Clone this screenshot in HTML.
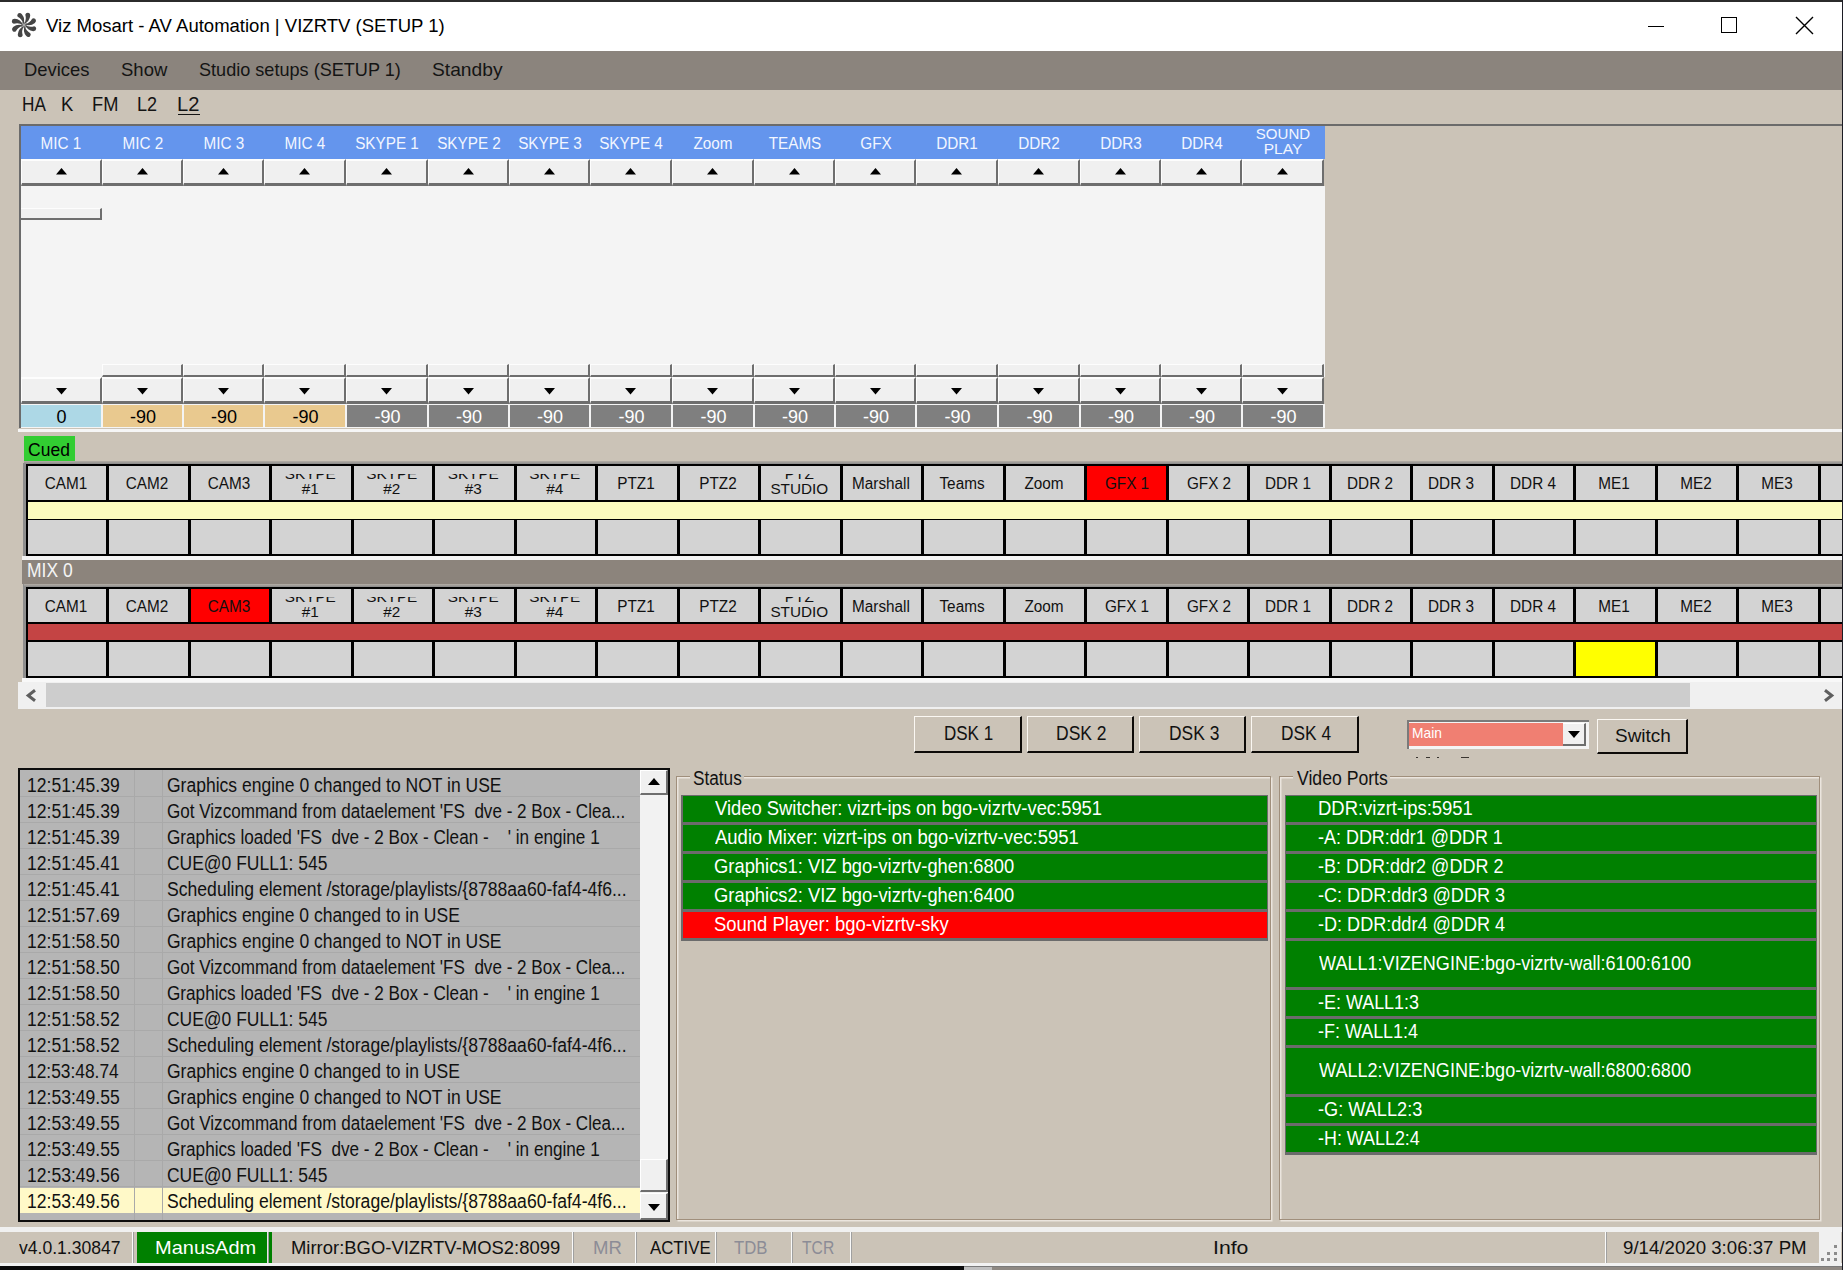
<!DOCTYPE html><html><head><meta charset="utf-8"><style>
html,body{margin:0;padding:0;width:1843px;height:1270px;overflow:hidden;background:#cbc3b7;font-family:"Liberation Sans", sans-serif;}
div,span,svg{position:absolute;box-sizing:border-box;}
.t{white-space:pre;line-height:1;}
</style></head><body>
<div style="left:0px;top:0px;width:1843px;height:2px;background:#2b2b2b;"></div>
<div style="left:0px;top:2px;width:1843px;height:49px;background:#ffffff;"></div>
<svg style="left:11.3px;top:12px" width="26" height="26" viewBox="0 0 26 26" overflow="visible"><circle cx="13" cy="13" r="3.2" fill="#a8a8a8"/><path transform="rotate(14 13 13)" d="M12.8 12 Q 17.6 8.4 16.8 2.6 Q 16.2 -0.2 13.8 0.2 Q 11.6 0.8 11.8 2.8 Q 14.4 7 12.8 12 Z" fill="#454545"/><path transform="rotate(59 13 13)" d="M12.8 12 Q 17.6 8.4 16.8 2.6 Q 16.2 -0.2 13.8 0.2 Q 11.6 0.8 11.8 2.8 Q 14.4 7 12.8 12 Z" fill="#454545"/><path transform="rotate(104 13 13)" d="M12.8 12 Q 17.6 8.4 16.8 2.6 Q 16.2 -0.2 13.8 0.2 Q 11.6 0.8 11.8 2.8 Q 14.4 7 12.8 12 Z" fill="#454545"/><path transform="rotate(149 13 13)" d="M12.8 12 Q 17.6 8.4 16.8 2.6 Q 16.2 -0.2 13.8 0.2 Q 11.6 0.8 11.8 2.8 Q 14.4 7 12.8 12 Z" fill="#454545"/><path transform="rotate(194 13 13)" d="M12.8 12 Q 17.6 8.4 16.8 2.6 Q 16.2 -0.2 13.8 0.2 Q 11.6 0.8 11.8 2.8 Q 14.4 7 12.8 12 Z" fill="#454545"/><path transform="rotate(239 13 13)" d="M12.8 12 Q 17.6 8.4 16.8 2.6 Q 16.2 -0.2 13.8 0.2 Q 11.6 0.8 11.8 2.8 Q 14.4 7 12.8 12 Z" fill="#454545"/><path transform="rotate(284 13 13)" d="M12.8 12 Q 17.6 8.4 16.8 2.6 Q 16.2 -0.2 13.8 0.2 Q 11.6 0.8 11.8 2.8 Q 14.4 7 12.8 12 Z" fill="#454545"/><path transform="rotate(329 13 13)" d="M12.8 12 Q 17.6 8.4 16.8 2.6 Q 16.2 -0.2 13.8 0.2 Q 11.6 0.8 11.8 2.8 Q 14.4 7 12.8 12 Z" fill="#454545"/></svg>
<span class="t" style="left:46.10px;top:17.07px;font-size:18.46px;color:#000;transform:scaleX(1.0045);transform-origin:0 0;">Viz Mosart - AV Automation | VIZRTV (SETUP 1)</span>
<div style="left:1648px;top:25.5px;width:16px;height:1.5px;background:#000;"></div>
<div style="left:1721px;top:17px;width:16px;height:16px;border:1.5px solid #000"></div>
<svg style="left:1795px;top:16px" width="19" height="19" viewBox="0 0 19 19"><path d="M1 1L18 18M18 1L1 18" stroke="#000" stroke-width="1.4"/></svg>
<div style="left:0px;top:51px;width:1843px;height:39px;background:#8b847d;"></div>
<span class="t" style="left:24.23px;top:60.18px;font-size:19.04px;color:#141414;transform:scaleX(0.9682);transform-origin:0 0;">Devices</span>
<span class="t" style="left:120.83px;top:60.18px;font-size:19.04px;color:#141414;transform:scaleX(0.9723);transform-origin:0 0;">Show</span>
<span class="t" style="left:198.75px;top:60.18px;font-size:19.04px;color:#141414;transform:scaleX(0.9505);transform-origin:0 0;">Studio setups (SETUP 1)</span>
<span class="t" style="left:431.79px;top:60.18px;font-size:19.04px;color:#141414;transform:scaleX(1.0103);transform-origin:0 0;">Standby</span>
<span class="t" style="left:22.24px;top:93.92px;font-size:20.06px;color:#141414;transform:scaleX(0.8577);transform-origin:0 0;">HA</span>
<span class="t" style="left:60.98px;top:93.92px;font-size:20.06px;color:#141414;transform:scaleX(0.9167);transform-origin:0 0;">K</span>
<span class="t" style="left:91.99px;top:93.92px;font-size:20.06px;color:#141414;transform:scaleX(0.9115);transform-origin:0 0;">FM</span>
<span class="t" style="left:137.20px;top:93.92px;font-size:20.06px;color:#141414;transform:scaleX(0.9000);transform-origin:0 0;">L2</span>
<span class="t" style="left:177.30px;top:93.92px;font-size:20.06px;color:#141414;transform:scaleX(1.0050);transform-origin:0 0;">L2</span>
<div style="left:177.5px;top:113.5px;width:22px;height:1.5px;background:#141414;"></div>
<div style="left:19px;top:124px;width:1824px;height:2px;background:#6b6b6b;"></div>
<div style="left:19px;top:125px;width:2px;height:303px;background:#6b6b6b;"></div>
<div style="left:21px;top:126px;width:1304px;height:33px;background:#6495ed;"></div>
<div style="left:21px;top:186px;width:1304px;height:191px;background:#f4f4f4;"></div>
<div style="left:21px;top:404px;width:1304px;height:24px;background:#f4f4f4;"></div>
<span class="t" style="left:-238.7px;width:600px;text-align:center;top:135.86px;font-size:16px;color:#f2f6ff;transform:scaleX(0.955);">MIC 1</span>
<div style="left:21px;top:159px;width:81px;height:27px;background:#f0f0f0;border-top:2px solid #fdfdfd;border-left:1px solid #fdfdfd;border-bottom:3px solid #6e6e6e;border-right:2px solid #6e6e6e"></div>
<svg style="left:55.5px;top:168.3px" width="11" height="6.5" viewBox="0 0 11 6.5"><path d="M5.5 0L11 6.5H0Z" fill="#000"/></svg>
<div style="left:21px;top:377px;width:81px;height:27px;background:#f0f0f0;border-top:2px solid #fdfdfd;border-left:1px solid #fdfdfd;border-bottom:3px solid #6e6e6e;border-right:2px solid #6e6e6e"></div>
<svg style="left:55.5px;top:388.2px" width="11" height="6.5" viewBox="0 0 11 6.5"><path d="M0 0H11L5.5 6.5Z" fill="#000"/></svg>
<div style="left:21px;top:208px;width:81px;height:12px;background:#f0f0f0;border-top:1px solid #fdfdfd;border-bottom:2px solid #6e6e6e;border-right:2px solid #6e6e6e"></div>
<div style="left:21px;top:405px;width:80px;height:22px;background:#add8e6;"></div>
<span class="t" style="left:-238.5px;width:600px;text-align:center;top:408.06px;font-size:18px;color:#000;">0</span>
<span class="t" style="left:-157.2px;width:600px;text-align:center;top:135.86px;font-size:16px;color:#f2f6ff;transform:scaleX(0.955);">MIC 2</span>
<div style="left:102px;top:159px;width:81px;height:27px;background:#f0f0f0;border-top:2px solid #fdfdfd;border-left:1px solid #fdfdfd;border-bottom:3px solid #6e6e6e;border-right:2px solid #6e6e6e"></div>
<svg style="left:136.5px;top:168.3px" width="11" height="6.5" viewBox="0 0 11 6.5"><path d="M5.5 0L11 6.5H0Z" fill="#000"/></svg>
<div style="left:102px;top:377px;width:81px;height:27px;background:#f0f0f0;border-top:2px solid #fdfdfd;border-left:1px solid #fdfdfd;border-bottom:3px solid #6e6e6e;border-right:2px solid #6e6e6e"></div>
<svg style="left:136.5px;top:388.2px" width="11" height="6.5" viewBox="0 0 11 6.5"><path d="M0 0H11L5.5 6.5Z" fill="#000"/></svg>
<div style="left:102px;top:364px;width:81px;height:13px;background:#f0f0f0;border-top:1px solid #fdfdfd;border-left:1px solid #fdfdfd;border-bottom:2px solid #6e6e6e;border-right:2px solid #6e6e6e"></div>
<div style="left:103px;top:405px;width:79px;height:22px;background:#e9c98f;"></div>
<span class="t" style="left:-157.0px;width:600px;text-align:center;top:408.06px;font-size:18px;color:#000;">-90</span>
<span class="t" style="left:-76.19999999999999px;width:600px;text-align:center;top:135.86px;font-size:16px;color:#f2f6ff;transform:scaleX(0.955);">MIC 3</span>
<div style="left:183px;top:159px;width:81px;height:27px;background:#f0f0f0;border-top:2px solid #fdfdfd;border-left:1px solid #fdfdfd;border-bottom:3px solid #6e6e6e;border-right:2px solid #6e6e6e"></div>
<svg style="left:217.5px;top:168.3px" width="11" height="6.5" viewBox="0 0 11 6.5"><path d="M5.5 0L11 6.5H0Z" fill="#000"/></svg>
<div style="left:183px;top:377px;width:81px;height:27px;background:#f0f0f0;border-top:2px solid #fdfdfd;border-left:1px solid #fdfdfd;border-bottom:3px solid #6e6e6e;border-right:2px solid #6e6e6e"></div>
<svg style="left:217.5px;top:388.2px" width="11" height="6.5" viewBox="0 0 11 6.5"><path d="M0 0H11L5.5 6.5Z" fill="#000"/></svg>
<div style="left:183px;top:364px;width:81px;height:13px;background:#f0f0f0;border-top:1px solid #fdfdfd;border-left:1px solid #fdfdfd;border-bottom:2px solid #6e6e6e;border-right:2px solid #6e6e6e"></div>
<div style="left:184px;top:405px;width:79px;height:22px;background:#e9c98f;"></div>
<span class="t" style="left:-76.0px;width:600px;text-align:center;top:408.06px;font-size:18px;color:#000;">-90</span>
<span class="t" style="left:5.300000000000011px;width:600px;text-align:center;top:135.86px;font-size:16px;color:#f2f6ff;transform:scaleX(0.955);">MIC 4</span>
<div style="left:264px;top:159px;width:82px;height:27px;background:#f0f0f0;border-top:2px solid #fdfdfd;border-left:1px solid #fdfdfd;border-bottom:3px solid #6e6e6e;border-right:2px solid #6e6e6e"></div>
<svg style="left:299.0px;top:168.3px" width="11" height="6.5" viewBox="0 0 11 6.5"><path d="M5.5 0L11 6.5H0Z" fill="#000"/></svg>
<div style="left:264px;top:377px;width:82px;height:27px;background:#f0f0f0;border-top:2px solid #fdfdfd;border-left:1px solid #fdfdfd;border-bottom:3px solid #6e6e6e;border-right:2px solid #6e6e6e"></div>
<svg style="left:299.0px;top:388.2px" width="11" height="6.5" viewBox="0 0 11 6.5"><path d="M0 0H11L5.5 6.5Z" fill="#000"/></svg>
<div style="left:264px;top:364px;width:82px;height:13px;background:#f0f0f0;border-top:1px solid #fdfdfd;border-left:1px solid #fdfdfd;border-bottom:2px solid #6e6e6e;border-right:2px solid #6e6e6e"></div>
<div style="left:265px;top:405px;width:80px;height:22px;background:#e9c98f;"></div>
<span class="t" style="left:5.5px;width:600px;text-align:center;top:408.06px;font-size:18px;color:#000;">-90</span>
<span class="t" style="left:87.30000000000001px;width:600px;text-align:center;top:135.86px;font-size:16px;color:#f2f6ff;transform:scaleX(0.955);">SKYPE 1</span>
<div style="left:346px;top:159px;width:82px;height:27px;background:#f0f0f0;border-top:2px solid #fdfdfd;border-left:1px solid #fdfdfd;border-bottom:3px solid #6e6e6e;border-right:2px solid #6e6e6e"></div>
<svg style="left:381.0px;top:168.3px" width="11" height="6.5" viewBox="0 0 11 6.5"><path d="M5.5 0L11 6.5H0Z" fill="#000"/></svg>
<div style="left:346px;top:377px;width:82px;height:27px;background:#f0f0f0;border-top:2px solid #fdfdfd;border-left:1px solid #fdfdfd;border-bottom:3px solid #6e6e6e;border-right:2px solid #6e6e6e"></div>
<svg style="left:381.0px;top:388.2px" width="11" height="6.5" viewBox="0 0 11 6.5"><path d="M0 0H11L5.5 6.5Z" fill="#000"/></svg>
<div style="left:346px;top:364px;width:82px;height:13px;background:#f0f0f0;border-top:1px solid #fdfdfd;border-left:1px solid #fdfdfd;border-bottom:2px solid #6e6e6e;border-right:2px solid #6e6e6e"></div>
<div style="left:347px;top:405px;width:80px;height:22px;background:#7f7f7f;"></div>
<span class="t" style="left:87.5px;width:600px;text-align:center;top:408.06px;font-size:18px;color:#fff;">-90</span>
<span class="t" style="left:168.8px;width:600px;text-align:center;top:135.86px;font-size:16px;color:#f2f6ff;transform:scaleX(0.955);">SKYPE 2</span>
<div style="left:428px;top:159px;width:81px;height:27px;background:#f0f0f0;border-top:2px solid #fdfdfd;border-left:1px solid #fdfdfd;border-bottom:3px solid #6e6e6e;border-right:2px solid #6e6e6e"></div>
<svg style="left:462.5px;top:168.3px" width="11" height="6.5" viewBox="0 0 11 6.5"><path d="M5.5 0L11 6.5H0Z" fill="#000"/></svg>
<div style="left:428px;top:377px;width:81px;height:27px;background:#f0f0f0;border-top:2px solid #fdfdfd;border-left:1px solid #fdfdfd;border-bottom:3px solid #6e6e6e;border-right:2px solid #6e6e6e"></div>
<svg style="left:462.5px;top:388.2px" width="11" height="6.5" viewBox="0 0 11 6.5"><path d="M0 0H11L5.5 6.5Z" fill="#000"/></svg>
<div style="left:428px;top:364px;width:81px;height:13px;background:#f0f0f0;border-top:1px solid #fdfdfd;border-left:1px solid #fdfdfd;border-bottom:2px solid #6e6e6e;border-right:2px solid #6e6e6e"></div>
<div style="left:429px;top:405px;width:79px;height:22px;background:#7f7f7f;"></div>
<span class="t" style="left:169.0px;width:600px;text-align:center;top:408.06px;font-size:18px;color:#fff;">-90</span>
<span class="t" style="left:249.79999999999995px;width:600px;text-align:center;top:135.86px;font-size:16px;color:#f2f6ff;transform:scaleX(0.955);">SKYPE 3</span>
<div style="left:509px;top:159px;width:81px;height:27px;background:#f0f0f0;border-top:2px solid #fdfdfd;border-left:1px solid #fdfdfd;border-bottom:3px solid #6e6e6e;border-right:2px solid #6e6e6e"></div>
<svg style="left:543.5px;top:168.3px" width="11" height="6.5" viewBox="0 0 11 6.5"><path d="M5.5 0L11 6.5H0Z" fill="#000"/></svg>
<div style="left:509px;top:377px;width:81px;height:27px;background:#f0f0f0;border-top:2px solid #fdfdfd;border-left:1px solid #fdfdfd;border-bottom:3px solid #6e6e6e;border-right:2px solid #6e6e6e"></div>
<svg style="left:543.5px;top:388.2px" width="11" height="6.5" viewBox="0 0 11 6.5"><path d="M0 0H11L5.5 6.5Z" fill="#000"/></svg>
<div style="left:509px;top:364px;width:81px;height:13px;background:#f0f0f0;border-top:1px solid #fdfdfd;border-left:1px solid #fdfdfd;border-bottom:2px solid #6e6e6e;border-right:2px solid #6e6e6e"></div>
<div style="left:510px;top:405px;width:79px;height:22px;background:#7f7f7f;"></div>
<span class="t" style="left:250.0px;width:600px;text-align:center;top:408.06px;font-size:18px;color:#fff;">-90</span>
<span class="t" style="left:331.29999999999995px;width:600px;text-align:center;top:135.86px;font-size:16px;color:#f2f6ff;transform:scaleX(0.955);">SKYPE 4</span>
<div style="left:590px;top:159px;width:82px;height:27px;background:#f0f0f0;border-top:2px solid #fdfdfd;border-left:1px solid #fdfdfd;border-bottom:3px solid #6e6e6e;border-right:2px solid #6e6e6e"></div>
<svg style="left:625.0px;top:168.3px" width="11" height="6.5" viewBox="0 0 11 6.5"><path d="M5.5 0L11 6.5H0Z" fill="#000"/></svg>
<div style="left:590px;top:377px;width:82px;height:27px;background:#f0f0f0;border-top:2px solid #fdfdfd;border-left:1px solid #fdfdfd;border-bottom:3px solid #6e6e6e;border-right:2px solid #6e6e6e"></div>
<svg style="left:625.0px;top:388.2px" width="11" height="6.5" viewBox="0 0 11 6.5"><path d="M0 0H11L5.5 6.5Z" fill="#000"/></svg>
<div style="left:590px;top:364px;width:82px;height:13px;background:#f0f0f0;border-top:1px solid #fdfdfd;border-left:1px solid #fdfdfd;border-bottom:2px solid #6e6e6e;border-right:2px solid #6e6e6e"></div>
<div style="left:591px;top:405px;width:80px;height:22px;background:#7f7f7f;"></div>
<span class="t" style="left:331.5px;width:600px;text-align:center;top:408.06px;font-size:18px;color:#fff;">-90</span>
<span class="t" style="left:413.29999999999995px;width:600px;text-align:center;top:135.86px;font-size:16px;color:#f2f6ff;transform:scaleX(0.955);">Zoom</span>
<div style="left:672px;top:159px;width:82px;height:27px;background:#f0f0f0;border-top:2px solid #fdfdfd;border-left:1px solid #fdfdfd;border-bottom:3px solid #6e6e6e;border-right:2px solid #6e6e6e"></div>
<svg style="left:707.0px;top:168.3px" width="11" height="6.5" viewBox="0 0 11 6.5"><path d="M5.5 0L11 6.5H0Z" fill="#000"/></svg>
<div style="left:672px;top:377px;width:82px;height:27px;background:#f0f0f0;border-top:2px solid #fdfdfd;border-left:1px solid #fdfdfd;border-bottom:3px solid #6e6e6e;border-right:2px solid #6e6e6e"></div>
<svg style="left:707.0px;top:388.2px" width="11" height="6.5" viewBox="0 0 11 6.5"><path d="M0 0H11L5.5 6.5Z" fill="#000"/></svg>
<div style="left:672px;top:364px;width:82px;height:13px;background:#f0f0f0;border-top:1px solid #fdfdfd;border-left:1px solid #fdfdfd;border-bottom:2px solid #6e6e6e;border-right:2px solid #6e6e6e"></div>
<div style="left:673px;top:405px;width:80px;height:22px;background:#7f7f7f;"></div>
<span class="t" style="left:413.5px;width:600px;text-align:center;top:408.06px;font-size:18px;color:#fff;">-90</span>
<span class="t" style="left:494.79999999999995px;width:600px;text-align:center;top:135.86px;font-size:16px;color:#f2f6ff;transform:scaleX(0.955);">TEAMS</span>
<div style="left:754px;top:159px;width:81px;height:27px;background:#f0f0f0;border-top:2px solid #fdfdfd;border-left:1px solid #fdfdfd;border-bottom:3px solid #6e6e6e;border-right:2px solid #6e6e6e"></div>
<svg style="left:788.5px;top:168.3px" width="11" height="6.5" viewBox="0 0 11 6.5"><path d="M5.5 0L11 6.5H0Z" fill="#000"/></svg>
<div style="left:754px;top:377px;width:81px;height:27px;background:#f0f0f0;border-top:2px solid #fdfdfd;border-left:1px solid #fdfdfd;border-bottom:3px solid #6e6e6e;border-right:2px solid #6e6e6e"></div>
<svg style="left:788.5px;top:388.2px" width="11" height="6.5" viewBox="0 0 11 6.5"><path d="M0 0H11L5.5 6.5Z" fill="#000"/></svg>
<div style="left:754px;top:364px;width:81px;height:13px;background:#f0f0f0;border-top:1px solid #fdfdfd;border-left:1px solid #fdfdfd;border-bottom:2px solid #6e6e6e;border-right:2px solid #6e6e6e"></div>
<div style="left:755px;top:405px;width:79px;height:22px;background:#7f7f7f;"></div>
<span class="t" style="left:495.0px;width:600px;text-align:center;top:408.06px;font-size:18px;color:#fff;">-90</span>
<span class="t" style="left:575.8px;width:600px;text-align:center;top:135.86px;font-size:16px;color:#f2f6ff;transform:scaleX(0.955);">GFX</span>
<div style="left:835px;top:159px;width:81px;height:27px;background:#f0f0f0;border-top:2px solid #fdfdfd;border-left:1px solid #fdfdfd;border-bottom:3px solid #6e6e6e;border-right:2px solid #6e6e6e"></div>
<svg style="left:869.5px;top:168.3px" width="11" height="6.5" viewBox="0 0 11 6.5"><path d="M5.5 0L11 6.5H0Z" fill="#000"/></svg>
<div style="left:835px;top:377px;width:81px;height:27px;background:#f0f0f0;border-top:2px solid #fdfdfd;border-left:1px solid #fdfdfd;border-bottom:3px solid #6e6e6e;border-right:2px solid #6e6e6e"></div>
<svg style="left:869.5px;top:388.2px" width="11" height="6.5" viewBox="0 0 11 6.5"><path d="M0 0H11L5.5 6.5Z" fill="#000"/></svg>
<div style="left:835px;top:364px;width:81px;height:13px;background:#f0f0f0;border-top:1px solid #fdfdfd;border-left:1px solid #fdfdfd;border-bottom:2px solid #6e6e6e;border-right:2px solid #6e6e6e"></div>
<div style="left:836px;top:405px;width:79px;height:22px;background:#7f7f7f;"></div>
<span class="t" style="left:576.0px;width:600px;text-align:center;top:408.06px;font-size:18px;color:#fff;">-90</span>
<span class="t" style="left:657.3px;width:600px;text-align:center;top:135.86px;font-size:16px;color:#f2f6ff;transform:scaleX(0.955);">DDR1</span>
<div style="left:916px;top:159px;width:82px;height:27px;background:#f0f0f0;border-top:2px solid #fdfdfd;border-left:1px solid #fdfdfd;border-bottom:3px solid #6e6e6e;border-right:2px solid #6e6e6e"></div>
<svg style="left:951.0px;top:168.3px" width="11" height="6.5" viewBox="0 0 11 6.5"><path d="M5.5 0L11 6.5H0Z" fill="#000"/></svg>
<div style="left:916px;top:377px;width:82px;height:27px;background:#f0f0f0;border-top:2px solid #fdfdfd;border-left:1px solid #fdfdfd;border-bottom:3px solid #6e6e6e;border-right:2px solid #6e6e6e"></div>
<svg style="left:951.0px;top:388.2px" width="11" height="6.5" viewBox="0 0 11 6.5"><path d="M0 0H11L5.5 6.5Z" fill="#000"/></svg>
<div style="left:916px;top:364px;width:82px;height:13px;background:#f0f0f0;border-top:1px solid #fdfdfd;border-left:1px solid #fdfdfd;border-bottom:2px solid #6e6e6e;border-right:2px solid #6e6e6e"></div>
<div style="left:917px;top:405px;width:80px;height:22px;background:#7f7f7f;"></div>
<span class="t" style="left:657.5px;width:600px;text-align:center;top:408.06px;font-size:18px;color:#fff;">-90</span>
<span class="t" style="left:739.3px;width:600px;text-align:center;top:135.86px;font-size:16px;color:#f2f6ff;transform:scaleX(0.955);">DDR2</span>
<div style="left:998px;top:159px;width:82px;height:27px;background:#f0f0f0;border-top:2px solid #fdfdfd;border-left:1px solid #fdfdfd;border-bottom:3px solid #6e6e6e;border-right:2px solid #6e6e6e"></div>
<svg style="left:1033.0px;top:168.3px" width="11" height="6.5" viewBox="0 0 11 6.5"><path d="M5.5 0L11 6.5H0Z" fill="#000"/></svg>
<div style="left:998px;top:377px;width:82px;height:27px;background:#f0f0f0;border-top:2px solid #fdfdfd;border-left:1px solid #fdfdfd;border-bottom:3px solid #6e6e6e;border-right:2px solid #6e6e6e"></div>
<svg style="left:1033.0px;top:388.2px" width="11" height="6.5" viewBox="0 0 11 6.5"><path d="M0 0H11L5.5 6.5Z" fill="#000"/></svg>
<div style="left:998px;top:364px;width:82px;height:13px;background:#f0f0f0;border-top:1px solid #fdfdfd;border-left:1px solid #fdfdfd;border-bottom:2px solid #6e6e6e;border-right:2px solid #6e6e6e"></div>
<div style="left:999px;top:405px;width:80px;height:22px;background:#7f7f7f;"></div>
<span class="t" style="left:739.5px;width:600px;text-align:center;top:408.06px;font-size:18px;color:#fff;">-90</span>
<span class="t" style="left:820.8px;width:600px;text-align:center;top:135.86px;font-size:16px;color:#f2f6ff;transform:scaleX(0.955);">DDR3</span>
<div style="left:1080px;top:159px;width:81px;height:27px;background:#f0f0f0;border-top:2px solid #fdfdfd;border-left:1px solid #fdfdfd;border-bottom:3px solid #6e6e6e;border-right:2px solid #6e6e6e"></div>
<svg style="left:1114.5px;top:168.3px" width="11" height="6.5" viewBox="0 0 11 6.5"><path d="M5.5 0L11 6.5H0Z" fill="#000"/></svg>
<div style="left:1080px;top:377px;width:81px;height:27px;background:#f0f0f0;border-top:2px solid #fdfdfd;border-left:1px solid #fdfdfd;border-bottom:3px solid #6e6e6e;border-right:2px solid #6e6e6e"></div>
<svg style="left:1114.5px;top:388.2px" width="11" height="6.5" viewBox="0 0 11 6.5"><path d="M0 0H11L5.5 6.5Z" fill="#000"/></svg>
<div style="left:1080px;top:364px;width:81px;height:13px;background:#f0f0f0;border-top:1px solid #fdfdfd;border-left:1px solid #fdfdfd;border-bottom:2px solid #6e6e6e;border-right:2px solid #6e6e6e"></div>
<div style="left:1081px;top:405px;width:79px;height:22px;background:#7f7f7f;"></div>
<span class="t" style="left:821.0px;width:600px;text-align:center;top:408.06px;font-size:18px;color:#fff;">-90</span>
<span class="t" style="left:901.8px;width:600px;text-align:center;top:135.86px;font-size:16px;color:#f2f6ff;transform:scaleX(0.955);">DDR4</span>
<div style="left:1161px;top:159px;width:81px;height:27px;background:#f0f0f0;border-top:2px solid #fdfdfd;border-left:1px solid #fdfdfd;border-bottom:3px solid #6e6e6e;border-right:2px solid #6e6e6e"></div>
<svg style="left:1195.5px;top:168.3px" width="11" height="6.5" viewBox="0 0 11 6.5"><path d="M5.5 0L11 6.5H0Z" fill="#000"/></svg>
<div style="left:1161px;top:377px;width:81px;height:27px;background:#f0f0f0;border-top:2px solid #fdfdfd;border-left:1px solid #fdfdfd;border-bottom:3px solid #6e6e6e;border-right:2px solid #6e6e6e"></div>
<svg style="left:1195.5px;top:388.2px" width="11" height="6.5" viewBox="0 0 11 6.5"><path d="M0 0H11L5.5 6.5Z" fill="#000"/></svg>
<div style="left:1161px;top:364px;width:81px;height:13px;background:#f0f0f0;border-top:1px solid #fdfdfd;border-left:1px solid #fdfdfd;border-bottom:2px solid #6e6e6e;border-right:2px solid #6e6e6e"></div>
<div style="left:1162px;top:405px;width:79px;height:22px;background:#7f7f7f;"></div>
<span class="t" style="left:902.0px;width:600px;text-align:center;top:408.06px;font-size:18px;color:#fff;">-90</span>
<span class="t" style="left:983.0px;width:600px;text-align:center;top:125.68px;font-size:15.5px;color:#f2f6ff;transform:scaleX(0.97);">SOUND</span>
<span class="t" style="left:983.0px;width:600px;text-align:center;top:141.48px;font-size:15.5px;color:#f2f6ff;">PLAY</span>
<div style="left:1242px;top:159px;width:82px;height:27px;background:#f0f0f0;border-top:2px solid #fdfdfd;border-left:1px solid #fdfdfd;border-bottom:3px solid #6e6e6e;border-right:2px solid #6e6e6e"></div>
<svg style="left:1277.0px;top:168.3px" width="11" height="6.5" viewBox="0 0 11 6.5"><path d="M5.5 0L11 6.5H0Z" fill="#000"/></svg>
<div style="left:1242px;top:377px;width:82px;height:27px;background:#f0f0f0;border-top:2px solid #fdfdfd;border-left:1px solid #fdfdfd;border-bottom:3px solid #6e6e6e;border-right:2px solid #6e6e6e"></div>
<svg style="left:1277.0px;top:388.2px" width="11" height="6.5" viewBox="0 0 11 6.5"><path d="M0 0H11L5.5 6.5Z" fill="#000"/></svg>
<div style="left:1242px;top:364px;width:82px;height:13px;background:#f0f0f0;border-top:1px solid #fdfdfd;border-left:1px solid #fdfdfd;border-bottom:2px solid #6e6e6e;border-right:2px solid #6e6e6e"></div>
<div style="left:1243px;top:405px;width:80px;height:22px;background:#7f7f7f;"></div>
<span class="t" style="left:983.5px;width:600px;text-align:center;top:408.06px;font-size:18px;color:#fff;">-90</span>
<div style="left:18px;top:428.5px;width:1825px;height:4px;background:#f6f6f6;"></div>
<div style="left:18px;top:432px;width:1824px;height:276px;background:#cbc3b7;"></div>
<div style="left:24px;top:436px;width:51px;height:27px;background:#32cd32;"></div>
<span class="t" style="left:27.54px;top:440.60px;font-size:18.31px;color:#000;transform:scaleX(0.9571);transform-origin:0 0;">Cued</span>
<div style="left:23px;top:463px;width:3px;height:215px;background:#8e8e8e;"></div>
<div style="left:24px;top:461px;width:1818px;height:3px;background:linear-gradient(#b4aea6,#8a8a8a)"></div>
<div style="left:26px;top:464px;width:1816px;height:92px;background:#000;"></div>
<div style="left:28px;top:502px;width:1814px;height:17px;background:#fbfbbe;"></div>
<div style="left:28px;top:466px;width:78px;height:34px;background:#d3d3d3;"></div>
<div style="left:28px;top:520px;width:78px;height:34px;background:#d3d3d3;"></div>
<span class="t" style="left:-234.2px;width:600px;text-align:center;top:475.56px;font-size:16px;color:#111;transform:scaleX(0.956);">CAM1</span>
<div style="left:109px;top:466px;width:79px;height:34px;background:#d3d3d3;"></div>
<div style="left:109px;top:520px;width:79px;height:34px;background:#d3d3d3;"></div>
<span class="t" style="left:-152.7px;width:600px;text-align:center;top:475.56px;font-size:16px;color:#111;transform:scaleX(0.956);">CAM2</span>
<div style="left:191px;top:466px;width:78px;height:34px;background:#d3d3d3;"></div>
<div style="left:191px;top:520px;width:78px;height:34px;background:#d3d3d3;"></div>
<span class="t" style="left:-71.19999999999999px;width:600px;text-align:center;top:475.56px;font-size:16px;color:#111;transform:scaleX(0.956);">CAM3</span>
<div style="left:272px;top:466px;width:79px;height:34px;background:#d3d3d3;"></div>
<div style="left:272px;top:520px;width:79px;height:34px;background:#d3d3d3;"></div>
<div style="left:272px;top:473.6px;width:79px;height:6.4px;overflow:hidden"><span class="t" style="left:-1.2px;width:79px;text-align:center;top:-7.6px;font-size:15.3px;color:#111">SKYPE</span></div>
<span class="t" style="left:10.300000000000011px;width:600px;text-align:center;top:481.25px;font-size:15.3px;color:#111;">#1</span>
<div style="left:354px;top:466px;width:78px;height:34px;background:#d3d3d3;"></div>
<div style="left:354px;top:520px;width:78px;height:34px;background:#d3d3d3;"></div>
<div style="left:354px;top:473.6px;width:78px;height:6.4px;overflow:hidden"><span class="t" style="left:-1.2px;width:78px;text-align:center;top:-7.6px;font-size:15.3px;color:#111">SKYPE</span></div>
<span class="t" style="left:91.80000000000001px;width:600px;text-align:center;top:481.25px;font-size:15.3px;color:#111;">#2</span>
<div style="left:435px;top:466px;width:79px;height:34px;background:#d3d3d3;"></div>
<div style="left:435px;top:520px;width:79px;height:34px;background:#d3d3d3;"></div>
<div style="left:435px;top:473.6px;width:79px;height:6.4px;overflow:hidden"><span class="t" style="left:-1.2px;width:79px;text-align:center;top:-7.6px;font-size:15.3px;color:#111">SKYPE</span></div>
<span class="t" style="left:173.3px;width:600px;text-align:center;top:481.25px;font-size:15.3px;color:#111;">#3</span>
<div style="left:517px;top:466px;width:78px;height:34px;background:#d3d3d3;"></div>
<div style="left:517px;top:520px;width:78px;height:34px;background:#d3d3d3;"></div>
<div style="left:517px;top:473.6px;width:78px;height:6.4px;overflow:hidden"><span class="t" style="left:-1.2px;width:78px;text-align:center;top:-7.6px;font-size:15.3px;color:#111">SKYPE</span></div>
<span class="t" style="left:254.79999999999995px;width:600px;text-align:center;top:481.25px;font-size:15.3px;color:#111;">#4</span>
<div style="left:598px;top:466px;width:79px;height:34px;background:#d3d3d3;"></div>
<div style="left:598px;top:520px;width:79px;height:34px;background:#d3d3d3;"></div>
<span class="t" style="left:336.29999999999995px;width:600px;text-align:center;top:475.56px;font-size:16px;color:#111;transform:scaleX(0.956);">PTZ1</span>
<div style="left:680px;top:466px;width:78px;height:34px;background:#d3d3d3;"></div>
<div style="left:680px;top:520px;width:78px;height:34px;background:#d3d3d3;"></div>
<span class="t" style="left:417.79999999999995px;width:600px;text-align:center;top:475.56px;font-size:16px;color:#111;transform:scaleX(0.956);">PTZ2</span>
<div style="left:761px;top:466px;width:79px;height:34px;background:#d3d3d3;"></div>
<div style="left:761px;top:520px;width:79px;height:34px;background:#d3d3d3;"></div>
<div style="left:761px;top:473.6px;width:79px;height:6.4px;overflow:hidden"><span class="t" style="left:-1.2px;width:79px;text-align:center;top:-7.6px;font-size:15.3px;color:#111">PTZ</span></div>
<span class="t" style="left:499.29999999999995px;width:600px;text-align:center;top:481.25px;font-size:15.3px;color:#111;">STUDIO</span>
<div style="left:843px;top:466px;width:78px;height:34px;background:#d3d3d3;"></div>
<div style="left:843px;top:520px;width:78px;height:34px;background:#d3d3d3;"></div>
<span class="t" style="left:580.8px;width:600px;text-align:center;top:475.56px;font-size:16px;color:#111;transform:scaleX(0.956);">Marshall</span>
<div style="left:924px;top:466px;width:79px;height:34px;background:#d3d3d3;"></div>
<div style="left:924px;top:520px;width:79px;height:34px;background:#d3d3d3;"></div>
<span class="t" style="left:662.3px;width:600px;text-align:center;top:475.56px;font-size:16px;color:#111;transform:scaleX(0.956);">Teams</span>
<div style="left:1006px;top:466px;width:78px;height:34px;background:#d3d3d3;"></div>
<div style="left:1006px;top:520px;width:78px;height:34px;background:#d3d3d3;"></div>
<span class="t" style="left:743.8px;width:600px;text-align:center;top:475.56px;font-size:16px;color:#111;transform:scaleX(0.956);">Zoom</span>
<div style="left:1087px;top:466px;width:79px;height:34px;background:#ff0000;"></div>
<div style="left:1087px;top:520px;width:79px;height:34px;background:#d3d3d3;"></div>
<span class="t" style="left:827.3px;width:600px;text-align:center;top:475.56px;font-size:16px;color:#111;transform:scaleX(0.956);">GFX 1</span>
<div style="left:1169px;top:466px;width:78px;height:34px;background:#d3d3d3;"></div>
<div style="left:1169px;top:520px;width:78px;height:34px;background:#d3d3d3;"></div>
<span class="t" style="left:908.8px;width:600px;text-align:center;top:475.56px;font-size:16px;color:#111;transform:scaleX(0.956);">GFX 2</span>
<div style="left:1250px;top:466px;width:79px;height:34px;background:#d3d3d3;"></div>
<div style="left:1250px;top:520px;width:79px;height:34px;background:#d3d3d3;"></div>
<span class="t" style="left:988.3px;width:600px;text-align:center;top:475.56px;font-size:16px;color:#111;transform:scaleX(0.956);">DDR 1</span>
<div style="left:1332px;top:466px;width:78px;height:34px;background:#d3d3d3;"></div>
<div style="left:1332px;top:520px;width:78px;height:34px;background:#d3d3d3;"></div>
<span class="t" style="left:1069.8px;width:600px;text-align:center;top:475.56px;font-size:16px;color:#111;transform:scaleX(0.956);">DDR 2</span>
<div style="left:1413px;top:466px;width:79px;height:34px;background:#d3d3d3;"></div>
<div style="left:1413px;top:520px;width:79px;height:34px;background:#d3d3d3;"></div>
<span class="t" style="left:1151.3px;width:600px;text-align:center;top:475.56px;font-size:16px;color:#111;transform:scaleX(0.956);">DDR 3</span>
<div style="left:1495px;top:466px;width:78px;height:34px;background:#d3d3d3;"></div>
<div style="left:1495px;top:520px;width:78px;height:34px;background:#d3d3d3;"></div>
<span class="t" style="left:1232.8px;width:600px;text-align:center;top:475.56px;font-size:16px;color:#111;transform:scaleX(0.956);">DDR 4</span>
<div style="left:1576px;top:466px;width:79px;height:34px;background:#d3d3d3;"></div>
<div style="left:1576px;top:520px;width:79px;height:34px;background:#d3d3d3;"></div>
<span class="t" style="left:1314.3px;width:600px;text-align:center;top:475.56px;font-size:16px;color:#111;transform:scaleX(0.956);">ME1</span>
<div style="left:1658px;top:466px;width:78px;height:34px;background:#d3d3d3;"></div>
<div style="left:1658px;top:520px;width:78px;height:34px;background:#d3d3d3;"></div>
<span class="t" style="left:1395.8px;width:600px;text-align:center;top:475.56px;font-size:16px;color:#111;transform:scaleX(0.956);">ME2</span>
<div style="left:1739px;top:466px;width:79px;height:34px;background:#d3d3d3;"></div>
<div style="left:1739px;top:520px;width:79px;height:34px;background:#d3d3d3;"></div>
<span class="t" style="left:1477.3px;width:600px;text-align:center;top:475.56px;font-size:16px;color:#111;transform:scaleX(0.956);">ME3</span>
<div style="left:1821px;top:466px;width:21px;height:34px;background:#d3d3d3;"></div>
<div style="left:1821px;top:520px;width:21px;height:34px;background:#d3d3d3;"></div>
<div style="left:22px;top:556px;width:1820px;height:4px;background:#f4f4f4;"></div>
<div style="left:22px;top:560px;width:1820px;height:24px;background:#8c847c;"></div>
<span class="t" style="left:26.61px;top:561.39px;font-size:19.62px;color:#f4f4f4;transform:scaleX(0.8918);transform-origin:0 0;">MIX 0</span>
<div style="left:24px;top:584px;width:1818px;height:3px;background:linear-gradient(#b4aea6,#8a8a8a)"></div>
<div style="left:26px;top:587px;width:1816px;height:91px;background:#000;"></div>
<div style="left:28px;top:624px;width:1814px;height:16px;background:#c44444;"></div>
<div style="left:28px;top:589px;width:78px;height:33px;background:#d3d3d3;"></div>
<div style="left:28px;top:642px;width:78px;height:34px;background:#d3d3d3;"></div>
<span class="t" style="left:-234.2px;width:600px;text-align:center;top:598.56px;font-size:16px;color:#111;transform:scaleX(0.956);">CAM1</span>
<div style="left:109px;top:589px;width:79px;height:33px;background:#d3d3d3;"></div>
<div style="left:109px;top:642px;width:79px;height:34px;background:#d3d3d3;"></div>
<span class="t" style="left:-152.7px;width:600px;text-align:center;top:598.56px;font-size:16px;color:#111;transform:scaleX(0.956);">CAM2</span>
<div style="left:191px;top:589px;width:78px;height:33px;background:#ff0000;"></div>
<div style="left:191px;top:642px;width:78px;height:34px;background:#d3d3d3;"></div>
<span class="t" style="left:-71.19999999999999px;width:600px;text-align:center;top:598.56px;font-size:16px;color:#111;transform:scaleX(0.956);">CAM3</span>
<div style="left:272px;top:589px;width:79px;height:33px;background:#d3d3d3;"></div>
<div style="left:272px;top:642px;width:79px;height:34px;background:#d3d3d3;"></div>
<div style="left:272px;top:596.6px;width:79px;height:6.4px;overflow:hidden"><span class="t" style="left:-1.2px;width:79px;text-align:center;top:-7.6px;font-size:15.3px;color:#111">SKYPE</span></div>
<span class="t" style="left:10.300000000000011px;width:600px;text-align:center;top:604.25px;font-size:15.3px;color:#111;">#1</span>
<div style="left:354px;top:589px;width:78px;height:33px;background:#d3d3d3;"></div>
<div style="left:354px;top:642px;width:78px;height:34px;background:#d3d3d3;"></div>
<div style="left:354px;top:596.6px;width:78px;height:6.4px;overflow:hidden"><span class="t" style="left:-1.2px;width:78px;text-align:center;top:-7.6px;font-size:15.3px;color:#111">SKYPE</span></div>
<span class="t" style="left:91.80000000000001px;width:600px;text-align:center;top:604.25px;font-size:15.3px;color:#111;">#2</span>
<div style="left:435px;top:589px;width:79px;height:33px;background:#d3d3d3;"></div>
<div style="left:435px;top:642px;width:79px;height:34px;background:#d3d3d3;"></div>
<div style="left:435px;top:596.6px;width:79px;height:6.4px;overflow:hidden"><span class="t" style="left:-1.2px;width:79px;text-align:center;top:-7.6px;font-size:15.3px;color:#111">SKYPE</span></div>
<span class="t" style="left:173.3px;width:600px;text-align:center;top:604.25px;font-size:15.3px;color:#111;">#3</span>
<div style="left:517px;top:589px;width:78px;height:33px;background:#d3d3d3;"></div>
<div style="left:517px;top:642px;width:78px;height:34px;background:#d3d3d3;"></div>
<div style="left:517px;top:596.6px;width:78px;height:6.4px;overflow:hidden"><span class="t" style="left:-1.2px;width:78px;text-align:center;top:-7.6px;font-size:15.3px;color:#111">SKYPE</span></div>
<span class="t" style="left:254.79999999999995px;width:600px;text-align:center;top:604.25px;font-size:15.3px;color:#111;">#4</span>
<div style="left:598px;top:589px;width:79px;height:33px;background:#d3d3d3;"></div>
<div style="left:598px;top:642px;width:79px;height:34px;background:#d3d3d3;"></div>
<span class="t" style="left:336.29999999999995px;width:600px;text-align:center;top:598.56px;font-size:16px;color:#111;transform:scaleX(0.956);">PTZ1</span>
<div style="left:680px;top:589px;width:78px;height:33px;background:#d3d3d3;"></div>
<div style="left:680px;top:642px;width:78px;height:34px;background:#d3d3d3;"></div>
<span class="t" style="left:417.79999999999995px;width:600px;text-align:center;top:598.56px;font-size:16px;color:#111;transform:scaleX(0.956);">PTZ2</span>
<div style="left:761px;top:589px;width:79px;height:33px;background:#d3d3d3;"></div>
<div style="left:761px;top:642px;width:79px;height:34px;background:#d3d3d3;"></div>
<div style="left:761px;top:596.6px;width:79px;height:6.4px;overflow:hidden"><span class="t" style="left:-1.2px;width:79px;text-align:center;top:-7.6px;font-size:15.3px;color:#111">PTZ</span></div>
<span class="t" style="left:499.29999999999995px;width:600px;text-align:center;top:604.25px;font-size:15.3px;color:#111;">STUDIO</span>
<div style="left:843px;top:589px;width:78px;height:33px;background:#d3d3d3;"></div>
<div style="left:843px;top:642px;width:78px;height:34px;background:#d3d3d3;"></div>
<span class="t" style="left:580.8px;width:600px;text-align:center;top:598.56px;font-size:16px;color:#111;transform:scaleX(0.956);">Marshall</span>
<div style="left:924px;top:589px;width:79px;height:33px;background:#d3d3d3;"></div>
<div style="left:924px;top:642px;width:79px;height:34px;background:#d3d3d3;"></div>
<span class="t" style="left:662.3px;width:600px;text-align:center;top:598.56px;font-size:16px;color:#111;transform:scaleX(0.956);">Teams</span>
<div style="left:1006px;top:589px;width:78px;height:33px;background:#d3d3d3;"></div>
<div style="left:1006px;top:642px;width:78px;height:34px;background:#d3d3d3;"></div>
<span class="t" style="left:743.8px;width:600px;text-align:center;top:598.56px;font-size:16px;color:#111;transform:scaleX(0.956);">Zoom</span>
<div style="left:1087px;top:589px;width:79px;height:33px;background:#d3d3d3;"></div>
<div style="left:1087px;top:642px;width:79px;height:34px;background:#d3d3d3;"></div>
<span class="t" style="left:827.3px;width:600px;text-align:center;top:598.56px;font-size:16px;color:#111;transform:scaleX(0.956);">GFX 1</span>
<div style="left:1169px;top:589px;width:78px;height:33px;background:#d3d3d3;"></div>
<div style="left:1169px;top:642px;width:78px;height:34px;background:#d3d3d3;"></div>
<span class="t" style="left:908.8px;width:600px;text-align:center;top:598.56px;font-size:16px;color:#111;transform:scaleX(0.956);">GFX 2</span>
<div style="left:1250px;top:589px;width:79px;height:33px;background:#d3d3d3;"></div>
<div style="left:1250px;top:642px;width:79px;height:34px;background:#d3d3d3;"></div>
<span class="t" style="left:988.3px;width:600px;text-align:center;top:598.56px;font-size:16px;color:#111;transform:scaleX(0.956);">DDR 1</span>
<div style="left:1332px;top:589px;width:78px;height:33px;background:#d3d3d3;"></div>
<div style="left:1332px;top:642px;width:78px;height:34px;background:#d3d3d3;"></div>
<span class="t" style="left:1069.8px;width:600px;text-align:center;top:598.56px;font-size:16px;color:#111;transform:scaleX(0.956);">DDR 2</span>
<div style="left:1413px;top:589px;width:79px;height:33px;background:#d3d3d3;"></div>
<div style="left:1413px;top:642px;width:79px;height:34px;background:#d3d3d3;"></div>
<span class="t" style="left:1151.3px;width:600px;text-align:center;top:598.56px;font-size:16px;color:#111;transform:scaleX(0.956);">DDR 3</span>
<div style="left:1495px;top:589px;width:78px;height:33px;background:#d3d3d3;"></div>
<div style="left:1495px;top:642px;width:78px;height:34px;background:#d3d3d3;"></div>
<span class="t" style="left:1232.8px;width:600px;text-align:center;top:598.56px;font-size:16px;color:#111;transform:scaleX(0.956);">DDR 4</span>
<div style="left:1576px;top:589px;width:79px;height:33px;background:#d3d3d3;"></div>
<div style="left:1576px;top:642px;width:79px;height:34px;background:#ffff00;"></div>
<span class="t" style="left:1314.3px;width:600px;text-align:center;top:598.56px;font-size:16px;color:#111;transform:scaleX(0.956);">ME1</span>
<div style="left:1658px;top:589px;width:78px;height:33px;background:#d3d3d3;"></div>
<div style="left:1658px;top:642px;width:78px;height:34px;background:#d3d3d3;"></div>
<span class="t" style="left:1395.8px;width:600px;text-align:center;top:598.56px;font-size:16px;color:#111;transform:scaleX(0.956);">ME2</span>
<div style="left:1739px;top:589px;width:79px;height:33px;background:#d3d3d3;"></div>
<div style="left:1739px;top:642px;width:79px;height:34px;background:#d3d3d3;"></div>
<span class="t" style="left:1477.3px;width:600px;text-align:center;top:598.56px;font-size:16px;color:#111;transform:scaleX(0.956);">ME3</span>
<div style="left:1821px;top:589px;width:21px;height:33px;background:#d3d3d3;"></div>
<div style="left:1821px;top:642px;width:21px;height:34px;background:#d3d3d3;"></div>
<div style="left:22px;top:678px;width:1820px;height:4px;background:#f8f8f8;"></div>
<div style="left:18px;top:681.7px;width:1824px;height:27px;background:#f0f0f0;"></div>
<div style="left:45.8px;top:683.3px;width:1644px;height:24px;background:#cdcdcd;"></div>
<svg style="left:25px;top:689px" width="12" height="13" viewBox="0 0 12 13"><path d="M10 1.2L3.2 6.5L10 11.8" stroke="#5e5e5e" stroke-width="3" fill="none"/></svg>
<svg style="left:1822.5px;top:689px" width="12" height="13" viewBox="0 0 12 13"><path d="M2 1.2L8.8 6.5L2 11.8" stroke="#5e5e5e" stroke-width="3" fill="none"/></svg>
<div style="left:914px;top:715.6px;width:107.5px;height:37.5px;background:#cbc3b7;border-top:1.5px solid #fbf8f3;border-left:1.5px solid #fbf8f3;border-bottom:2.5px solid #0d0b08;border-right:2.5px solid #0d0b08"></div>
<span class="t" style="left:944.15px;top:722.82px;font-size:20.06px;color:#111;transform:scaleX(0.8482);transform-origin:0 0;">DSK 1</span>
<div style="left:1026.7px;top:715.6px;width:107.5px;height:37.5px;background:#cbc3b7;border-top:1.5px solid #fbf8f3;border-left:1.5px solid #fbf8f3;border-bottom:2.5px solid #0d0b08;border-right:2.5px solid #0d0b08"></div>
<span class="t" style="left:1056.43px;top:722.82px;font-size:20.06px;color:#111;transform:scaleX(0.8732);transform-origin:0 0;">DSK 2</span>
<div style="left:1138.7px;top:715.6px;width:107.5px;height:37.5px;background:#cbc3b7;border-top:1.5px solid #fbf8f3;border-left:1.5px solid #fbf8f3;border-bottom:2.5px solid #0d0b08;border-right:2.5px solid #0d0b08"></div>
<span class="t" style="left:1168.73px;top:722.82px;font-size:20.06px;color:#111;transform:scaleX(0.8696);transform-origin:0 0;">DSK 3</span>
<div style="left:1251.3px;top:715.6px;width:107.5px;height:37.5px;background:#cbc3b7;border-top:1.5px solid #fbf8f3;border-left:1.5px solid #fbf8f3;border-bottom:2.5px solid #0d0b08;border-right:2.5px solid #0d0b08"></div>
<span class="t" style="left:1280.84px;top:722.82px;font-size:20.06px;color:#111;transform:scaleX(0.8632);transform-origin:0 0;">DSK 4</span>
<div style="left:1407px;top:720px;width:182px;height:29px;background:#f4f4f4;border-top:2px solid #7a7a7a;border-left:2px solid #7a7a7a"></div>
<div style="left:1409px;top:722.5px;width:154px;height:23px;background:#f07f72;"></div>
<div style="left:1563px;top:722.5px;width:23px;height:23.5px;background:#f0f0f0;border-bottom:2px solid #6e6e6e;border-right:2px solid #6e6e6e;border-top:1px solid #fff"></div>
<svg style="left:1568px;top:731px" width="12" height="7" viewBox="0 0 12 7"><path d="M0 0H12L6 7Z" fill="#000"/></svg>
<span class="t" style="left:1412.01px;top:725.46px;font-size:15.41px;color:#ffffff;transform:scaleX(0.8937);transform-origin:0 0;">Main</span>
<div style="left:1597px;top:719px;width:91px;height:35px;background:#cbc3b7;border-top:1.5px solid #fbf8f3;border-left:1.5px solid #fbf8f3;border-bottom:2.5px solid #0d0b08;border-right:2.5px solid #0d0b08"></div>
<div style="left:1416px;top:756.5px;width:1.5px;height:1.5px;background:#3a3530;"></div>
<div style="left:1425.5px;top:756.5px;width:4px;height:1.5px;background:#3a3530;"></div>
<div style="left:1437px;top:756.5px;width:1.5px;height:1.5px;background:#3a3530;"></div>
<div style="left:1461px;top:756.5px;width:7.5px;height:1.5px;background:#3a3530;"></div>
<span class="t" style="left:1615.43px;top:727.59px;font-size:17.73px;color:#111;transform:scaleX(1.0700);transform-origin:0 0;">Switch</span>
<div style="left:18px;top:768px;width:652px;height:454px;background:#b5b5b5;border:2px solid #0d0d0d"></div>
<div style="left:20px;top:796.0px;width:620px;height:1px;background:#a9a9a9;"></div>
<span class="t" style="left:27.04px;top:775.37px;font-size:20.35px;color:#111;transform:scaleX(0.8619);transform-origin:0 0;">12:51:45.39</span>
<span class="t" style="left:166.84px;top:775.37px;font-size:20.35px;color:#111;transform:scaleX(0.8607);transform-origin:0 0;">Graphics engine 0 changed to NOT in USE</span>
<div style="left:20px;top:822.0px;width:620px;height:1px;background:#a9a9a9;"></div>
<span class="t" style="left:27.04px;top:801.37px;font-size:20.35px;color:#111;transform:scaleX(0.8619);transform-origin:0 0;">12:51:45.39</span>
<span class="t" style="left:166.86px;top:801.37px;font-size:20.35px;color:#111;transform:scaleX(0.8388);transform-origin:0 0;">Got Vizcommand from dataelement 'FS  dve - 2 Box - Clea...</span>
<div style="left:20px;top:848.0px;width:620px;height:1px;background:#a9a9a9;"></div>
<span class="t" style="left:27.04px;top:827.37px;font-size:20.35px;color:#111;transform:scaleX(0.8619);transform-origin:0 0;">12:51:45.39</span>
<span class="t" style="left:166.86px;top:827.37px;font-size:20.35px;color:#111;transform:scaleX(0.8431);transform-origin:0 0;">Graphics loaded 'FS  dve - 2 Box - Clean -    ' in engine 1</span>
<div style="left:20px;top:874.0px;width:620px;height:1px;background:#a9a9a9;"></div>
<span class="t" style="left:27.04px;top:853.37px;font-size:20.35px;color:#111;transform:scaleX(0.8619);transform-origin:0 0;">12:51:45.41</span>
<span class="t" style="left:166.84px;top:853.37px;font-size:20.35px;color:#111;transform:scaleX(0.8584);transform-origin:0 0;">CUE@0 FULL1: 545</span>
<div style="left:20px;top:900.0px;width:620px;height:1px;background:#a9a9a9;"></div>
<span class="t" style="left:27.04px;top:879.37px;font-size:20.35px;color:#111;transform:scaleX(0.8619);transform-origin:0 0;">12:51:45.41</span>
<span class="t" style="left:166.84px;top:879.37px;font-size:20.35px;color:#111;transform:scaleX(0.8647);transform-origin:0 0;">Scheduling element /storage/playlists/{8788aa60-faf4-4f6...</span>
<div style="left:20px;top:926.0px;width:620px;height:1px;background:#a9a9a9;"></div>
<span class="t" style="left:27.04px;top:905.37px;font-size:20.35px;color:#111;transform:scaleX(0.8619);transform-origin:0 0;">12:51:57.69</span>
<span class="t" style="left:166.84px;top:905.37px;font-size:20.35px;color:#111;transform:scaleX(0.8602);transform-origin:0 0;">Graphics engine 0 changed to in USE</span>
<div style="left:20px;top:952.0px;width:620px;height:1px;background:#a9a9a9;"></div>
<span class="t" style="left:27.04px;top:931.37px;font-size:20.35px;color:#111;transform:scaleX(0.8619);transform-origin:0 0;">12:51:58.50</span>
<span class="t" style="left:166.84px;top:931.37px;font-size:20.35px;color:#111;transform:scaleX(0.8607);transform-origin:0 0;">Graphics engine 0 changed to NOT in USE</span>
<div style="left:20px;top:978.0px;width:620px;height:1px;background:#a9a9a9;"></div>
<span class="t" style="left:27.04px;top:957.37px;font-size:20.35px;color:#111;transform:scaleX(0.8619);transform-origin:0 0;">12:51:58.50</span>
<span class="t" style="left:166.86px;top:957.37px;font-size:20.35px;color:#111;transform:scaleX(0.8388);transform-origin:0 0;">Got Vizcommand from dataelement 'FS  dve - 2 Box - Clea...</span>
<div style="left:20px;top:1004.0px;width:620px;height:1px;background:#a9a9a9;"></div>
<span class="t" style="left:27.04px;top:983.37px;font-size:20.35px;color:#111;transform:scaleX(0.8619);transform-origin:0 0;">12:51:58.50</span>
<span class="t" style="left:166.86px;top:983.37px;font-size:20.35px;color:#111;transform:scaleX(0.8431);transform-origin:0 0;">Graphics loaded 'FS  dve - 2 Box - Clean -    ' in engine 1</span>
<div style="left:20px;top:1030.0px;width:620px;height:1px;background:#a9a9a9;"></div>
<span class="t" style="left:27.04px;top:1009.37px;font-size:20.35px;color:#111;transform:scaleX(0.8619);transform-origin:0 0;">12:51:58.52</span>
<span class="t" style="left:166.84px;top:1009.37px;font-size:20.35px;color:#111;transform:scaleX(0.8584);transform-origin:0 0;">CUE@0 FULL1: 545</span>
<div style="left:20px;top:1056.0px;width:620px;height:1px;background:#a9a9a9;"></div>
<span class="t" style="left:27.04px;top:1035.37px;font-size:20.35px;color:#111;transform:scaleX(0.8619);transform-origin:0 0;">12:51:58.52</span>
<span class="t" style="left:166.84px;top:1035.37px;font-size:20.35px;color:#111;transform:scaleX(0.8647);transform-origin:0 0;">Scheduling element /storage/playlists/{8788aa60-faf4-4f6...</span>
<div style="left:20px;top:1082.0px;width:620px;height:1px;background:#a9a9a9;"></div>
<span class="t" style="left:27.05px;top:1061.37px;font-size:20.35px;color:#111;transform:scaleX(0.8538);transform-origin:0 0;">12:53:48.74</span>
<span class="t" style="left:166.84px;top:1061.37px;font-size:20.35px;color:#111;transform:scaleX(0.8602);transform-origin:0 0;">Graphics engine 0 changed to in USE</span>
<div style="left:20px;top:1108.0px;width:620px;height:1px;background:#a9a9a9;"></div>
<span class="t" style="left:27.04px;top:1087.37px;font-size:20.35px;color:#111;transform:scaleX(0.8619);transform-origin:0 0;">12:53:49.55</span>
<span class="t" style="left:166.84px;top:1087.37px;font-size:20.35px;color:#111;transform:scaleX(0.8607);transform-origin:0 0;">Graphics engine 0 changed to NOT in USE</span>
<div style="left:20px;top:1134.0px;width:620px;height:1px;background:#a9a9a9;"></div>
<span class="t" style="left:27.04px;top:1113.37px;font-size:20.35px;color:#111;transform:scaleX(0.8619);transform-origin:0 0;">12:53:49.55</span>
<span class="t" style="left:166.86px;top:1113.37px;font-size:20.35px;color:#111;transform:scaleX(0.8388);transform-origin:0 0;">Got Vizcommand from dataelement 'FS  dve - 2 Box - Clea...</span>
<div style="left:20px;top:1160.0px;width:620px;height:1px;background:#a9a9a9;"></div>
<span class="t" style="left:27.04px;top:1139.37px;font-size:20.35px;color:#111;transform:scaleX(0.8619);transform-origin:0 0;">12:53:49.55</span>
<span class="t" style="left:166.86px;top:1139.37px;font-size:20.35px;color:#111;transform:scaleX(0.8431);transform-origin:0 0;">Graphics loaded 'FS  dve - 2 Box - Clean -    ' in engine 1</span>
<div style="left:20px;top:1186.0px;width:620px;height:1px;background:#a9a9a9;"></div>
<span class="t" style="left:27.04px;top:1165.37px;font-size:20.35px;color:#111;transform:scaleX(0.8619);transform-origin:0 0;">12:53:49.56</span>
<span class="t" style="left:166.84px;top:1165.37px;font-size:20.35px;color:#111;transform:scaleX(0.8584);transform-origin:0 0;">CUE@0 FULL1: 545</span>
<div style="left:20px;top:1188px;width:620px;height:24.5px;background:#fff9c8;"></div>
<span class="t" style="left:27.04px;top:1191.37px;font-size:20.35px;color:#111;transform:scaleX(0.8619);transform-origin:0 0;">12:53:49.56</span>
<span class="t" style="left:166.84px;top:1191.37px;font-size:20.35px;color:#111;transform:scaleX(0.8647);transform-origin:0 0;">Scheduling element /storage/playlists/{8788aa60-faf4-4f6...</span>
<div style="left:134px;top:770px;width:1px;height:450px;background:#a9a9a9;"></div>
<div style="left:162px;top:770px;width:1px;height:450px;background:#a9a9a9;"></div>
<div style="left:640px;top:770px;width:28px;height:450px;background:#f2f2f2;"></div>
<div style="left:640px;top:770px;width:28px;height:25px;background:#f0f0f0;border-top:1px solid #fff;border-left:1px solid #fff;border-bottom:2px solid #6e6e6e;border-right:2px solid #6e6e6e"></div>
<svg style="left:648px;top:778px" width="12" height="7" viewBox="0 0 12 7"><path d="M6 0L12 7H0Z" fill="#000"/></svg>
<div style="left:640px;top:1159px;width:28px;height:32.5px;background:#f0f0f0;border-top:1px solid #fff;border-left:1px solid #fff;border-bottom:2px solid #6e6e6e;border-right:2px solid #6e6e6e"></div>
<div style="left:640px;top:1193px;width:28px;height:27px;background:#f0f0f0;border-top:1px solid #fff;border-left:1px solid #fff;border-bottom:2.5px solid #6e6e6e;border-right:2px solid #6e6e6e"></div>
<svg style="left:648px;top:1204px" width="12" height="7" viewBox="0 0 12 7"><path d="M0 0H12L6 7Z" fill="#000"/></svg>
<div style="left:675.8px;top:776px;width:595.2px;height:443.79999999999995px;border:1.7px solid #a08f7c;box-shadow:inset 1.5px 1.5px 0 #ebe5de, 1.5px 1.5px 0 #ebe5de"></div>
<div style="left:690px;top:768px;width:54px;height:14px;background:#cbc3b7;"></div>
<span class="t" style="left:692.63px;top:769.16px;font-size:19.77px;color:#111;transform:scaleX(0.8704);transform-origin:0 0;">Status</span>
<div style="left:1279px;top:776px;width:541px;height:443.79999999999995px;border:1.7px solid #a08f7c;box-shadow:inset 1.5px 1.5px 0 #ebe5de, 1.5px 1.5px 0 #ebe5de"></div>
<div style="left:1293.4px;top:768px;width:97.1px;height:14px;background:#cbc3b7;"></div>
<span class="t" style="left:1296.90px;top:769.16px;font-size:19.77px;color:#111;transform:scaleX(0.8921);transform-origin:0 0;">Video Ports</span>
<div style="left:681px;top:794.5px;width:587px;height:146.5px;background:#6b6b6b;"></div>
<div style="left:682.5px;top:796.0px;width:584px;height:26px;background:#008000;"></div>
<span class="t" style="left:715.10px;top:798.81px;font-size:19.48px;color:#ffffff;transform:scaleX(0.9447);transform-origin:0 0;">Video Switcher: vizrt-ips on bgo-vizrtv-vec:5951</span>
<div style="left:682.5px;top:825.0px;width:584px;height:26px;background:#008000;"></div>
<span class="t" style="left:715.10px;top:827.81px;font-size:19.48px;color:#ffffff;transform:scaleX(0.9497);transform-origin:0 0;">Audio Mixer: vizrt-ips on bgo-vizrtv-vec:5951</span>
<div style="left:682.5px;top:854.0px;width:584px;height:26px;background:#008000;"></div>
<span class="t" style="left:714.16px;top:856.81px;font-size:19.48px;color:#ffffff;transform:scaleX(0.9437);transform-origin:0 0;">Graphics1: VIZ bgo-vizrtv-ghen:6800</span>
<div style="left:682.5px;top:883.0px;width:584px;height:26px;background:#008000;"></div>
<span class="t" style="left:714.16px;top:885.81px;font-size:19.48px;color:#ffffff;transform:scaleX(0.9437);transform-origin:0 0;">Graphics2: VIZ bgo-vizrtv-ghen:6400</span>
<div style="left:682.5px;top:912.0px;width:584px;height:26px;background:#ff0000;"></div>
<span class="t" style="left:714.15px;top:914.81px;font-size:19.48px;color:#ffffff;transform:scaleX(0.9476);transform-origin:0 0;">Sound Player: bgo-vizrtv-sky</span>
<div style="left:1284.5px;top:794.5px;width:532.5px;height:360.5px;background:#6b6b6b;"></div>
<div style="left:1286.0px;top:796.0px;width:529.5px;height:26px;background:#008000;"></div>
<span class="t" style="left:1317.65px;top:798.81px;font-size:19.48px;color:#ffffff;transform:scaleX(0.9481);transform-origin:0 0;">DDR:vizrt-ips:5951</span>
<div style="left:1286.0px;top:825.0px;width:529.5px;height:26px;background:#008000;"></div>
<span class="t" style="left:1317.68px;top:827.81px;font-size:19.48px;color:#ffffff;transform:scaleX(0.9221);transform-origin:0 0;">-A: DDR:ddr1 @DDR 1</span>
<div style="left:1286.0px;top:854.0px;width:529.5px;height:26px;background:#008000;"></div>
<span class="t" style="left:1317.67px;top:856.81px;font-size:19.48px;color:#ffffff;transform:scaleX(0.9251);transform-origin:0 0;">-B: DDR:ddr2 @DDR 2</span>
<div style="left:1286.0px;top:883.0px;width:529.5px;height:26px;background:#008000;"></div>
<span class="t" style="left:1317.67px;top:885.81px;font-size:19.48px;color:#ffffff;transform:scaleX(0.9285);transform-origin:0 0;">-C: DDR:ddr3 @DDR 3</span>
<div style="left:1286.0px;top:912.0px;width:529.5px;height:26px;background:#008000;"></div>
<span class="t" style="left:1317.67px;top:914.81px;font-size:19.48px;color:#ffffff;transform:scaleX(0.9285);transform-origin:0 0;">-D: DDR:ddr4 @DDR 4</span>
<div style="left:1286.0px;top:941.0px;width:529.5px;height:46px;background:#008000;"></div>
<span class="t" style="left:1318.60px;top:953.81px;font-size:19.48px;color:#ffffff;transform:scaleX(0.9283);transform-origin:0 0;">WALL1:VIZENGINE:bgo-vizrtv-wall:6100:6100</span>
<div style="left:1286.0px;top:990.0px;width:529.5px;height:26px;background:#008000;"></div>
<span class="t" style="left:1317.68px;top:992.81px;font-size:19.48px;color:#ffffff;transform:scaleX(0.9213);transform-origin:0 0;">-E: WALL1:3</span>
<div style="left:1286.0px;top:1019.0px;width:529.5px;height:26px;background:#008000;"></div>
<span class="t" style="left:1317.68px;top:1021.81px;font-size:19.48px;color:#ffffff;transform:scaleX(0.9215);transform-origin:0 0;">-F: WALL1:4</span>
<div style="left:1286.0px;top:1048.0px;width:529.5px;height:46px;background:#008000;"></div>
<span class="t" style="left:1318.60px;top:1060.81px;font-size:19.48px;color:#ffffff;transform:scaleX(0.9283);transform-origin:0 0;">WALL2:VIZENGINE:bgo-vizrtv-wall:6800:6800</span>
<div style="left:1286.0px;top:1097.0px;width:529.5px;height:26px;background:#008000;"></div>
<span class="t" style="left:1317.67px;top:1099.81px;font-size:19.48px;color:#ffffff;transform:scaleX(0.9327);transform-origin:0 0;">-G: WALL2:3</span>
<div style="left:1286.0px;top:1126.0px;width:529.5px;height:26px;background:#008000;"></div>
<span class="t" style="left:1317.68px;top:1128.81px;font-size:19.48px;color:#ffffff;transform:scaleX(0.9193);transform-origin:0 0;">-H: WALL2:4</span>
<div style="left:0px;top:1227px;width:1843px;height:5px;background:#f0f0f0;"></div>
<div style="left:0px;top:1263px;width:1843px;height:3px;background:#f2f2f2;"></div>
<div style="left:0px;top:1266px;width:964px;height:4px;background:#0a0a0a;"></div>
<div style="left:964px;top:1266px;width:28px;height:4px;background:#c0c0c0;"></div>
<div style="left:992px;top:1266px;width:851px;height:4px;background:#8f8983;"></div>
<div style="left:964px;top:1266px;width:879px;height:1px;background:#7a7a7a;"></div>
<span class="t" style="left:19.00px;top:1238.08px;font-size:19.04px;color:#111;transform:scaleX(0.9220);transform-origin:0 0;">v4.0.1.30847</span>
<div style="left:132px;top:1232px;width:1px;height:31px;background:#fafafa;"></div>
<div style="left:133px;top:1232px;width:1px;height:31px;background:#a0a0a0;"></div>
<div style="left:136.6px;top:1232px;width:135.6px;height:31px;background:#008000;"></div>
<div style="left:267px;top:1232px;width:1px;height:31px;background:#e8e8e8;"></div>
<div style="left:268px;top:1232px;width:1px;height:31px;background:#9a9a9a;"></div>
<span class="t" style="left:155.05px;top:1238.08px;font-size:19.04px;color:#ffffff;transform:scaleX(1.0511);transform-origin:0 0;">ManusAdm</span>
<span class="t" style="left:290.53px;top:1238.08px;font-size:19.04px;color:#111;transform:scaleX(0.9692);transform-origin:0 0;">Mirror:BGO-VIZRTV-MOS2:8099</span>
<div style="left:571.5px;top:1232px;width:1px;height:31px;background:#fafafa;"></div>
<div style="left:572.5px;top:1232px;width:1px;height:31px;background:#a0a0a0;"></div>
<div style="left:635px;top:1232px;width:1px;height:31px;background:#fafafa;"></div>
<div style="left:636px;top:1232px;width:1px;height:31px;background:#a0a0a0;"></div>
<div style="left:715px;top:1232px;width:1px;height:31px;background:#fafafa;"></div>
<div style="left:716px;top:1232px;width:1px;height:31px;background:#a0a0a0;"></div>
<div style="left:791.3px;top:1232px;width:1px;height:31px;background:#fafafa;"></div>
<div style="left:792.3px;top:1232px;width:1px;height:31px;background:#a0a0a0;"></div>
<div style="left:850px;top:1232px;width:1px;height:31px;background:#fafafa;"></div>
<div style="left:851px;top:1232px;width:1px;height:31px;background:#a0a0a0;"></div>
<div style="left:1604.5px;top:1232px;width:1px;height:31px;background:#fafafa;"></div>
<div style="left:1605.5px;top:1232px;width:1px;height:31px;background:#a0a0a0;"></div>
<span class="t" style="left:593.23px;top:1238.08px;font-size:19.04px;color:#8c8c96;transform:scaleX(0.9750);transform-origin:0 0;">MR</span>
<span class="t" style="left:649.50px;top:1238.08px;font-size:19.04px;color:#111;transform:scaleX(0.8824);transform-origin:0 0;">ACTIVE</span>
<span class="t" style="left:733.50px;top:1238.08px;font-size:19.04px;color:#8c8c96;transform:scaleX(0.8784);transform-origin:0 0;">TDB</span>
<span class="t" style="left:802.20px;top:1238.08px;font-size:19.04px;color:#8c8c96;transform:scaleX(0.8237);transform-origin:0 0;">TCR</span>
<span class="t" style="left:1212.97px;top:1238.08px;font-size:19.04px;color:#111;transform:scaleX(1.1138);transform-origin:0 0;">Info</span>
<span class="t" style="left:1623.32px;top:1238.08px;font-size:19.04px;color:#111;transform:scaleX(0.9804);transform-origin:0 0;">9/14/2020 3:06:37 PM</span>
<div style="left:1818.7px;top:1232px;width:22.5px;height:34px;background:#f0f0f0;"></div>
<div style="left:1834px;top:1245px;width:2.5px;height:2.5px;background:#8c8c8c;"></div>
<div style="left:1827px;top:1252px;width:2.5px;height:2.5px;background:#8c8c8c;"></div>
<div style="left:1834px;top:1252px;width:2.5px;height:2.5px;background:#8c8c8c;"></div>
<div style="left:1821px;top:1258px;width:2.5px;height:2.5px;background:#8c8c8c;"></div>
<div style="left:1827px;top:1258px;width:2.5px;height:2.5px;background:#8c8c8c;"></div>
<div style="left:1834px;top:1258px;width:2.5px;height:2.5px;background:#8c8c8c;"></div>
<div style="left:1842px;top:0px;width:1px;height:1270px;background:#1c1c24;"></div>
</body></html>
